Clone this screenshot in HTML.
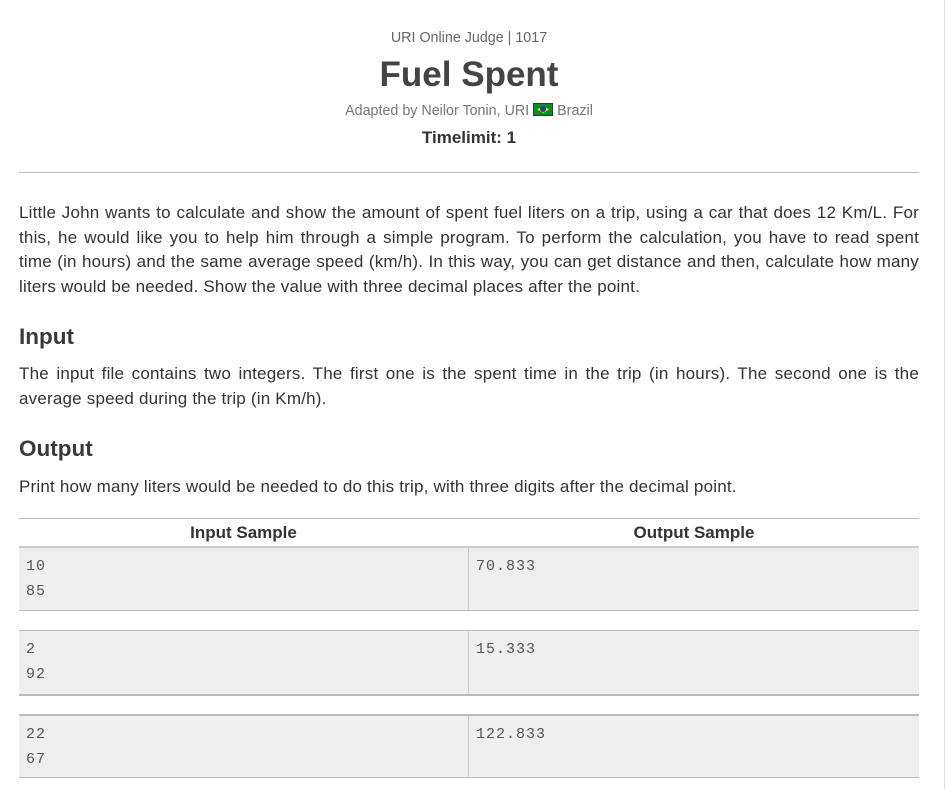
<!DOCTYPE html>
<html><head><meta charset="utf-8"><style>
*{margin:0;padding:0;box-sizing:border-box}
body{width:945px;height:789px;background:#fff;font-family:"Liberation Sans",Arial,sans-serif;color:#333;position:relative;overflow:hidden}
.a{position:absolute}
.c{left:0;width:938px;text-align:center}
.t{position:absolute;left:19px;width:900px;font-size:17px;letter-spacing:0.2px;line-height:24.7px;color:#333;white-space:nowrap}
.t span{display:block;text-align:justify;text-align-last:justify}
.t span.l{text-align-last:left}
h2{position:absolute;left:19px;font-size:22.5px;font-weight:bold;color:#3a3a3a}
.cell{position:absolute;background:#efefef;font-family:"Liberation Mono",monospace;font-size:15px;letter-spacing:1px;color:#555;line-height:24.5px;padding:7px 7px}
</style></head><body>
<div class="a" style="left:944px;top:0;width:1px;height:789px;background:#ddd"></div>
<div class="a c" style="top:30px;font-size:14.3px;color:#666">URI Online Judge | 1017</div>
<div class="a c" style="top:55px;font-size:35px;font-weight:bold;color:#444">Fuel Spent</div>
<div class="a c" style="top:103px;font-size:14.3px;color:#777">Adapted by Neilor Tonin, URI <span style="display:inline-block;width:20px;height:13px;background:#0a8c2a;border:1px solid #333;position:relative;vertical-align:-1px"><span style="position:absolute;left:3px;top:2px;width:12px;height:7px;background:#f5d800;clip-path:polygon(50% 0,100% 50%,50% 100%,0 50%)"></span><span style="position:absolute;left:6px;top:2px;width:6px;height:6px;border-radius:50%;background:#1c3f9c"></span></span> Brazil</div>
<div class="a c" style="top:128px;font-size:17px;font-weight:bold;color:#333">Timelimit: 1</div>
<div class="a" style="left:19px;top:172px;width:900px;height:1px;background:#bbb"></div>
<div class="t" style="top:201px"><span>Little John wants to calculate and show the amount of spent fuel liters on a trip, using a car that does 12 Km/L. For</span><span>this, he would like you to help him through a simple program. To perform the calculation, you have to read spent</span><span>time (in hours) and the same average speed (km/h). In this way, you can get distance and then, calculate how many</span><span class="l">liters would be needed. Show the value with three decimal places after the point.</span></div>
<h2 style="top:324px">Input</h2>
<div class="t" style="top:362px"><span>The input file contains two integers. The first one is the spent time in the trip (in hours). The second one is the</span><span class="l">average speed during the trip (in Km/h).</span></div>
<h2 style="top:436px">Output</h2>
<div class="t" style="top:475px"><span class="l">Print how many liters would be needed to do this trip, with three digits after the decimal point.</span></div>
<div class="a" style="left:19px;top:518px;width:900px;height:1px;background:#bbb"></div>
<div class="a" style="left:19px;top:523px;width:449px;text-align:center;font-weight:bold;font-size:17px">Input Sample</div>
<div class="a" style="left:469px;top:523px;width:450px;text-align:center;font-weight:bold;font-size:17px">Output Sample</div>
<div class="a" style="left:19px;top:546px;width:900px;height:2px;background:#ccc"></div>

<div class="cell" style="left:19px;top:548px;width:449px;height:62px">10<br>85</div>
<div class="cell" style="left:469px;top:548px;width:450px;height:62px">70.833</div>
<div class="a" style="left:468px;top:548px;width:1px;height:62px;background:#ccc"></div>
<div class="a" style="left:19px;top:610px;width:900px;height:1px;background:#bbb"></div>

<div class="a" style="left:19px;top:630px;width:900px;height:1px;background:#bbb"></div>
<div class="cell" style="left:19px;top:631px;width:449px;height:63px">2<br>92</div>
<div class="cell" style="left:469px;top:631px;width:450px;height:63px">15.333</div>
<div class="a" style="left:468px;top:631px;width:1px;height:63px;background:#ccc"></div>
<div class="a" style="left:19px;top:694px;width:900px;height:2px;background:#bbb"></div>

<div class="a" style="left:19px;top:714px;width:900px;height:2px;background:#bbb"></div>
<div class="cell" style="left:19px;top:716px;width:449px;height:61px">22<br>67</div>
<div class="cell" style="left:469px;top:716px;width:450px;height:61px">122.833</div>
<div class="a" style="left:468px;top:716px;width:1px;height:61px;background:#ccc"></div>
<div class="a" style="left:19px;top:777px;width:900px;height:1px;background:#bbb"></div>
</body></html>
